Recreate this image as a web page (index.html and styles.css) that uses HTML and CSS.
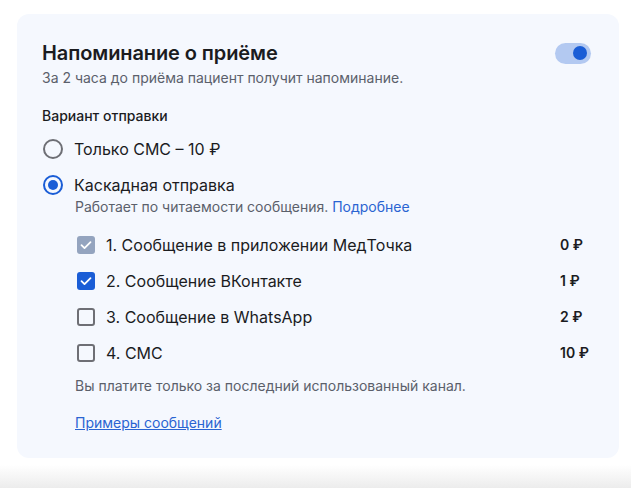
FILE: index.html
```html
<!DOCTYPE html>
<html lang="ru">
<head>
<meta charset="utf-8">
<link rel="stylesheet" href="styles.css">
</head>
<body>
<div class="page">
  <section class="card">
    <div class="head">
      <h2 class="title">Напоминание о приёме</h2>
      <span class="toggle"><span class="knob"></span></span>
    </div>
    <p class="sub">За 2 часа до приёма пациент получит напоминание.</p>
    <div class="label">Вариант отправки</div>
    <div class="radio-row first">
      <span class="radio"></span>
      <span class="rtext">Только СМС – 10 ₽</span>
    </div>
    <div class="radio-row">
      <span class="radio on"></span>
      <span class="rtext">Каскадная отправка</span>
    </div>
    <p class="desc">Работает по читаемости сообщения. <a class="more">Подробнее</a></p>
    <ul class="list">
      <li class="item">
        <span class="cb dis"><svg viewBox="0 0 18 18"><path d="M4.5 9.2l3 2.9 6-6" fill="none" stroke="#fff" stroke-width="1.8" stroke-linecap="round" stroke-linejoin="round"/></svg></span>
        <span class="itext">1. Сообщение в приложении МедТочка</span>
        <span class="price">0 ₽</span>
      </li>
      <li class="item">
        <span class="cb chk"><svg viewBox="0 0 18 18"><path d="M4.5 9.2l3 2.9 6-6" fill="none" stroke="#fff" stroke-width="1.8" stroke-linecap="round" stroke-linejoin="round"/></svg></span>
        <span class="itext">2. Сообщение ВКонтакте</span>
        <span class="price">1 ₽</span>
      </li>
      <li class="item">
        <span class="cb"></span>
        <span class="itext">3. Сообщение в WhatsApp</span>
        <span class="price">2 ₽</span>
      </li>
      <li class="item">
        <span class="cb"></span>
        <span class="itext">4. СМС</span>
        <span class="price">10 ₽</span>
      </li>
    </ul>
    <p class="note">Вы платите только за последний использованный канал.</p>
    <a class="examples">Примеры сообщений</a>
  </section>
  <div class="fade"></div>
</div>
</body>
</html>
```

FILE: styles.css
```css
* { box-sizing: border-box; }
html, body { margin: 0; padding: 0; background: #fff; }
body { font-family: Inter, "Noto Sans", "Liberation Sans", sans-serif; color: #1b1c1f; }
.page { padding: 14px 12px 0 17px; }
.card {
  background: #f5f8fe;
  border-radius: 12px;
  padding: 26px 28px 26px 25px;
  display: flex;
  flex-direction: column;
}
.head { display: flex; align-items: center; justify-content: space-between; height: 26px; }
.title { margin: 0; font-size: 20px; line-height: 26px; font-weight: 600; letter-spacing: -0.1px; }
.toggle {
  width: 36px; height: 21px; border-radius: 11px; background: #b3c9f1;
  display: flex; align-items: center; justify-content: flex-end; padding-right: 4px;
}
.knob { width: 14px; height: 14px; border-radius: 50%; background: #1a5dd6; }
.sub { margin: 3px 0 0; font-size: 14px; line-height: 18px; color: #5b606b; }
.label { margin-top: 20px; font-size: 14px; line-height: 18px; font-weight: 500; }
.radio-row { display: flex; align-items: center; height: 24px; margin-top: 12px; }
.radio {
  width: 20px; height: 20px; border-radius: 50%; border: 2px solid #6e6f75; margin-left: 1px;
  display: flex; align-items: center; justify-content: center; flex: none;
}
.radio.on { border-color: #1a5dd6; }
.radio.on::after { content: ""; width: 10px; height: 10px; border-radius: 50%; background: #1a5dd6; }
.rtext { margin-left: 11px; font-size: 16px; line-height: 20px; }
.desc { margin: 1px 0 0 33px; font-size: 14px; line-height: 18px; color: #5b606b; }
.more { color: #2a64d2; }
.list { list-style: none; margin: 17px 0 0 35px; padding: 0; display: flex; flex-direction: column; gap: 12px; }
.item { display: flex; align-items: center; height: 24px; }
.cb {
  width: 18px; height: 18px; border-radius: 3px; border: 2px solid #6e6f75; flex: none;
  display: flex; align-items: center; justify-content: center;
}
.cb svg { width: 18px; height: 18px; flex: none; }
.cb.dis { background: #94a4bf; border: none; }
.cb.chk { background: #1a5dd6; border: none; }
.itext { margin-left: 11px; font-size: 16px; line-height: 20px; flex: 1; }
.price { width: 34px; font-size: 14px; font-weight: 600; line-height: 18px; margin-right: -3px; }
.note { margin: 12px 0 0 33px; font-size: 14px; line-height: 18px; color: #5b606b; }
.examples { margin: 19px 0 0 33px; font-size: 14px; line-height: 18px; color: #2a64d2; text-decoration: underline; align-self: flex-start; }
.fade { height: 23px; margin: 7px -12px 0 -17px; background: linear-gradient(#fff, #ececec); }
```
